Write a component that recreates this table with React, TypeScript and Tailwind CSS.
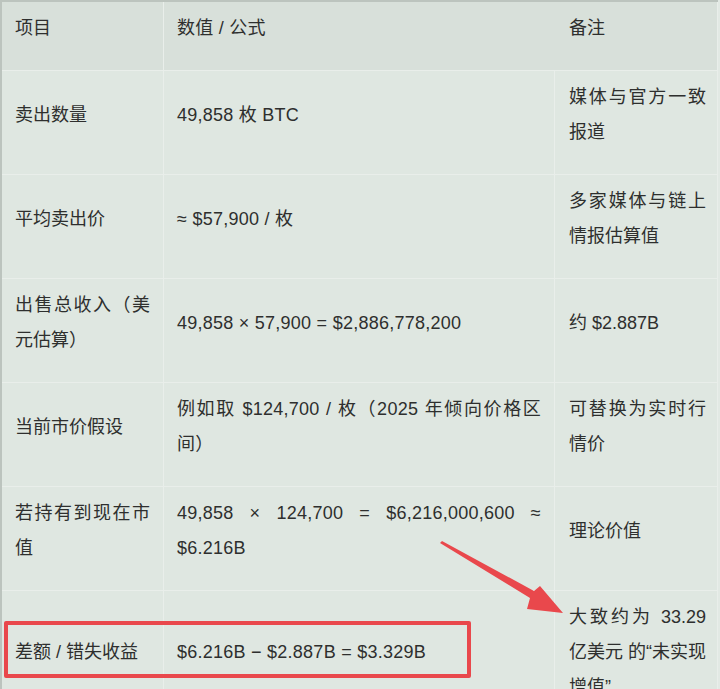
import React from 'react';

type Row = { item: string; value: string; note: string };

const rows: Row[] = [
    { item: '卖出数量', value: '49,858 枚 BTC', note: '媒体与官方一致报道' },
    { item: '平均卖出价', value: '≈ $57,900 / 枚', note: '多家媒体与链上情报估算值' },
    { item: '出售总收入（美元估算）', value: '49,858 × 57,900 = $2,886,778,200', note: '约 $2.887B' },
    { item: '当前市价假设', value: '例如取 $124,700 / 枚（2025 年倾向价格区间）', note: '可替换为实时行情价' },
    { item: '若持有到现在市值', value: '49,858 × 124,700 = $6,216,000,600 ≈ $6.216B', note: '理论价值' },
    { item: '差额 / 错失收益', value: '$6.216B − $2.887B = $3.329B', note: '大致约为 33.29 亿美元 的“未实现增值”' },
];

const cell = 'flex flex-col justify-center border-r border-b border-[#e9eeea] pt-[9px] pb-[24px] text-justify';

export default function App() {
    return (
        <div className="relative w-[720px] h-[689px] overflow-hidden bg-[#e2e9e4] font-['Liberation_Sans','Noto_Sans_CJK_SC',sans-serif] text-[18px] leading-[35px] text-[#2e2f2e]">
            <div className="w-[718px] border-t-2 border-l-2 border-[#bcc4be] bg-[#dfe7e1]">
                {/* header */}
                <div className="grid grid-cols-[162px_391px_163px] bg-[#d8e0da]">
                    <div className={`${cell} pl-[13px] pr-[13px]`}><p>项目</p></div>
                    <div className={`${cell} pl-[13px] pr-[13px] border-r-0 tracking-[0.25px]`}><p>数值 / 公式</p></div>
                    <div className={`${cell} pl-[14px] pr-[11px]`}><p>备注</p></div>
                </div>
                {rows.map((r) => (
                    <div key={r.item} className="grid grid-cols-[162px_391px_163px]">
                        <div className={`${cell} pl-[13px] pr-[13px]`}><p>{r.item}</p></div>
                        <div className={`${cell} pl-[13px] pr-[13px] tracking-[0.25px]`}><p>{r.value}</p></div>
                        <div className={`${cell} pl-[14px] pr-[11px]`}><p>{r.note}</p></div>
                    </div>
                ))}
            </div>

            {/* highlight box */}
            <div className="absolute left-[4px] top-[621px] w-[467px] h-[57px] border-4 border-[#e9484c] rounded-[2px]" />

            {/* arrow */}
            <svg className="absolute left-0 top-0" width="720" height="689" viewBox="0 0 720 689">
                <polygon
                    points="440,543 442,541 534,591 540,586 563,613 527,609 530,598"
                    fill="#e9484c"
                    strokeLinejoin="round"
                />
            </svg>
        </div>
    );
}
